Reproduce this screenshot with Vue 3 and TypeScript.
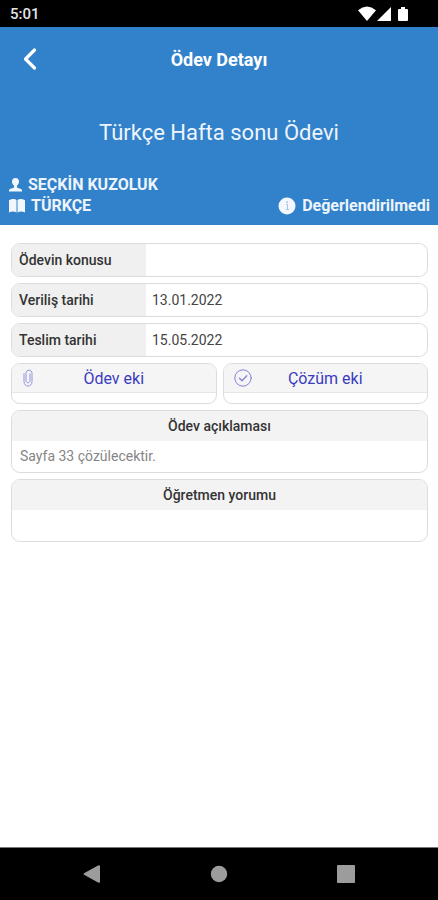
<script setup lang="ts">
interface Field {
  label: string
  value: string
}

interface Note {
  title: string
  text: string
}

const fields: Field[] = [
  { label: 'Ödevin konusu', value: '' },
  { label: 'Veriliş tarihi', value: '13.01.2022' },
  { label: 'Teslim tarihi', value: '15.05.2022' },
]

const notes: Note[] = [
  { title: 'Ödev açıklaması', text: 'Sayfa 33 çözülecektir.' },
  { title: 'Öğretmen yorumu', text: '' },
]
</script>

<template>
  <div class="screen">
    <div class="status-bar">
      <span class="clock">5:01</span>
      <svg class="signals" width="52" height="16" viewBox="0 0 52 16" fill="#fff">
        <path d="M0 4.2Q9-3 18 4.2L9 15Z" />
        <path d="M33 1V15H19Z" />
        <path d="M43 1H47V3H49Q50 3 50 4V14Q50 15 49 15H41Q40 15 40 14V4Q40 3 41 3H43Z" />
      </svg>
    </div>

    <header class="header">
      <div class="nav">
        <button class="back" type="button" aria-label="Geri">
          <svg width="16" height="24" viewBox="0 0 16 24" fill="none" stroke="#fff" stroke-width="3.200" stroke-linecap="round" stroke-linejoin="round">
            <path d="M12.500 3L3.500 12L12.500 21" />
          </svg>
        </button>
        <h1 class="nav-title">Ödev Detayı</h1>
      </div>
      <h2 class="title">Türkçe Hafta sonu Ödevi</h2>
      <div class="meta">
        <div class="who">
          <p class="line">
            <svg width="13" height="14" viewBox="0 0 13 14" fill="#f2f6fd">
              <path d="M6.500 0C9 0 10 1.500 10 3.600C10 5.600 9.200 6.800 8 7.600V9.300C8.300 10.500 13 10.500 13 12.200V13.500H0V12.200C0 10.500 4.700 10.500 5 9.300V7.600C3.800 6.800 3 5.600 3 3.600C3 1.500 4 0 6.500 0Z" />
            </svg>
            <span>SEÇKİN KUZOLUK</span>
          </p>
          <p class="line">
            <svg width="16" height="14" viewBox="0 0 16 14" fill="#f2f6fd">
              <path d="M0 1.200Q4-1.200 7.500 1V13.500Q4 11.500 0 13.500Z" />
              <path d="M8.500 1Q12-1.200 16 1.200V13.500Q12 11.500 8.500 13.500Z" />
            </svg>
            <span>TÜRKÇE</span>
          </p>
        </div>
        <p class="line state">
          <svg width="18" height="18" viewBox="0 0 18 18">
            <circle cx="9" cy="9" r="8.500" fill="#f4f7fd" />
            <path d="M8 7.500H9.500V12.500M8 12.500H11" fill="none" stroke="#a9c3e3" />
            <circle cx="9" cy="5.200" r="1" fill="#a9c3e3" />
          </svg>
          <span>Değerlendirilmedi</span>
        </p>
      </div>
    </header>

    <main class="content">
      <dl v-for="field in fields" :key="field.label" class="field">
        <dt>{{ field.label }}</dt>
        <dd>{{ field.value }}</dd>
      </dl>

      <div class="attachments">
        <button class="attachment" type="button">
          <span class="attachment-head">
            <svg width="18" height="18" viewBox="0 0 18 18" fill="none" stroke="#9293dc" stroke-linecap="round">
              <path d="M2 4.500V12.500C2 18.500 10 18.500 10 12.500V4.500C10 0 4 0 4 4.500V11.500C4 14.500 8 14.500 8 11.500V5" />
            </svg>
            <span class="attachment-label">Ödev eki</span>
          </span>
        </button>
        <button class="attachment" type="button">
          <span class="attachment-head">
            <svg width="18" height="18" viewBox="0 0 18 18" fill="none" stroke="#8384d6" stroke-linecap="round" stroke-linejoin="round">
              <circle cx="9" cy="9" r="8.200" />
              <path d="M5.500 9.200L8 11.700L12.800 6.800" stroke-width="1.300" />
            </svg>
            <span class="attachment-label">Çözüm eki</span>
          </span>
        </button>
      </div>

      <section v-for="note in notes" :key="note.title" class="note">
        <h3>{{ note.title }}</h3>
        <p>{{ note.text }}</p>
      </section>
    </main>

    <nav class="system-nav" aria-label="Sistem">
      <button type="button" aria-label="Geri">
        <svg width="18" height="18" viewBox="0 0 18 18" fill="#9c9c9c"><path d="M1 8.200L15.500 0.200Q17 0 17 1V17Q17 18 15.500 17.800L1 9.800Q0 9 1 8.200Z" /></svg>
      </button>
      <button type="button" aria-label="Ana ekran">
        <svg width="18" height="18" viewBox="0 0 18 18" fill="#9c9c9c"><circle cx="9" cy="9" r="8.200" /></svg>
      </button>
      <button type="button" aria-label="Son uygulamalar">
        <svg width="18" height="18" viewBox="0 0 18 18" fill="#9c9c9c"><rect width="18" height="18" rx="1" /></svg>
      </button>
    </nav>
  </div>
</template>

<style>
body {
  margin: 0;
}
</style>

<style scoped>
.screen {
  display: flex;
  flex-direction: column;
  min-height: 100vh;
  background: #fff;
  font-family: Roboto, "Liberation Sans", sans-serif;
}

h1,
h2,
h3,
p,
dl,
dd {
  margin: 0;
}

button {
  padding: 0;
  border: 0;
  background: none;
  font: inherit;
  cursor: pointer;
}

svg {
  display: block;
  flex: none;
}

.status-bar {
  display: flex;
  align-items: center;
  justify-content: space-between;
  height: 27px;
  padding: 0 28px 0 10px;
  background: #000;
}

.clock {
  color: #e4e4e4;
  font-size: 15px;
  font-weight: 500;
}

.header {
  background: #3182ca;
  color: #fff;
}

.nav {
  display: grid;
  grid-template-columns: 60px 1fr 60px;
  align-items: center;
  height: 64px;
}

.back {
  display: flex;
  padding: 8px 22px;
}

.nav-title {
  font-size: 18px;
  font-weight: 700;
  text-align: center;
}

.title {
  padding: 26px 16px 25px;
  color: #eef4fc;
  font-size: 22px;
  font-weight: 400;
  line-height: 32px;
  text-align: center;
}

.meta {
  display: flex;
  align-items: flex-end;
  justify-content: space-between;
  padding: 0 8px 9px 9px;
}

.line {
  display: flex;
  align-items: center;
  gap: 6px;
  color: #eef4fc;
  font-size: 16px;
  font-weight: 700;
  line-height: 21px;
}

.content {
  display: flex;
  flex: 1;
  flex-direction: column;
  gap: 6px;
  padding: 18px 10px 24px 11px;
}

.field,
.attachment,
.note {
  overflow: hidden;
  border: 1px solid #dcdcdc;
  border-radius: 9px;
  background: #fff;
}

.field {
  display: grid;
  grid-template-columns: 134px 1fr;
  font-size: 14px;
  line-height: 32px;
}

.field dt {
  padding-left: 7px;
  background: #f0f0f0;
  color: #333;
  font-weight: 500;
}

.field dd {
  min-height: 32px;
  padding-left: 6px;
  color: #444;
}

.attachments {
  display: grid;
  grid-template-columns: 1fr 1fr;
  gap: 6px;
}

.attachment {
  height: 41px;
}

.attachment-head {
  display: grid;
  grid-template-columns: 18px 1fr 18px;
  align-items: center;
  height: 28px;
  margin-bottom: 10px;
  padding: 0 10px;
  border-bottom: 1px solid #e6e6e6;
  background: #f5f5f5;
}

.attachment-label {
  color: #3a3cc0;
  font-size: 16px;
  text-align: center;
}

.note h3 {
  background: #f3f3f3;
  color: #333;
  font-size: 14px;
  font-weight: 500;
  line-height: 30px;
  text-align: center;
}

.note p {
  min-height: 31px;
  padding: 0 8px;
  color: #858585;
  font-size: 14px;
  line-height: 31px;
}

.system-nav {
  display: flex;
  align-items: center;
  justify-content: space-around;
  height: 52px;
  padding: 0 29px;
  border-top: 1px solid #777;
  background: #000;
}
</style>
